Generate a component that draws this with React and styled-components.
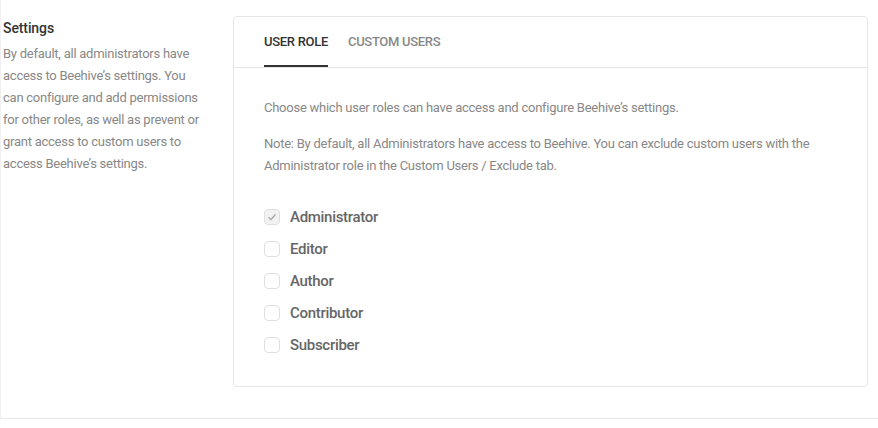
import React from "react";
import styled, { createGlobalStyle } from "styled-components";

const Global = createGlobalStyle`
  html, body { margin: 0; padding: 0; background: #fff; }
  body { font-family: Roboto, "Liberation Sans", sans-serif; -webkit-font-smoothing: antialiased; }
  * { box-sizing: border-box; }
`;

const Wrapper = styled.div`
  display: grid;
  grid-template-columns: 230px 1fr;
  padding: 16px 10px 31px 2px;
  border-left: 1px solid #f0f0f0;
  border-bottom: 1px solid #e6e6e6;
`;

const Side = styled.div`
  max-width: 205px;
  padding-top: 1px;
`;

const Heading = styled.h3`
  margin: 0 0 4px;
  font-size: 14px;
  line-height: 22px;
  font-weight: 500;
  letter-spacing: -0.1px;
  color: #333;
`;

const SideText = styled.p`
  margin: 0;
  font-size: 13px;
  line-height: 22px;
  letter-spacing: -0.25px;
  color: #888;
`;

const Card = styled.div`
  border: 1px solid #e6e6e6;
  border-radius: 4px;
  background: #fff;
`;

const TabBar = styled.div`
  display: flex;
  gap: 20px;
  padding: 0 30px;
  border-bottom: 1px solid #e6e6e6;
`;

const Tab = styled.div`
  padding: 15px 0 13px;
  font-size: 13px;
  line-height: 20px;
  font-weight: 500;
  letter-spacing: -0.3px;
  text-transform: uppercase;
  color: ${(p) => (p.$active ? "#333" : "#888")};
  border-bottom: 2px solid ${(p) => (p.$active ? "#333" : "transparent")};
`;

const Body = styled.div`
  padding: 29px 30px 25px;
`;

const Para = styled.p`
  margin: 0 0 14px;
  font-size: 13px;
  line-height: 22px;
  letter-spacing: -0.25px;
  color: #888;
`;

const List = styled.div`
  margin-top: 24px;
  display: flex;
  flex-direction: column;
`;

const Row = styled.label`
  display: flex;
  align-items: center;
  gap: 10px;
  height: 32px;
  font-size: 15px;
  font-weight: 500;
  letter-spacing: -0.3px;
  color: #666;
`;

const Box = styled.span`
  width: 16px;
  height: 16px;
  border: 1px solid #e0e0e0;
  border-radius: 4px;
  background: ${(p) => (p.$checked ? "#f2f2f2" : "#fff")};
  display: flex;
  align-items: center;
  justify-content: center;
`;

const roles = [
  { name: "Administrator", checked: true },
  { name: "Editor" },
  { name: "Author" },
  { name: "Contributor" },
  { name: "Subscriber" },
];

export default function App() {
  return (
    <>
      <Global />
      <Wrapper>
        <Side>
          <Heading>Settings</Heading>
          <SideText>
            By default, all administrators have access to Beehive’s settings. You can configure and add
            permissions for other roles, as well as prevent or grant access to custom users to access
            Beehive’s settings.
          </SideText>
        </Side>
        <Card>
          <TabBar>
            <Tab $active>User Role</Tab>
            <Tab>Custom Users</Tab>
          </TabBar>
          <Body>
            <Para>Choose which user roles can have access and configure Beehive’s settings.</Para>
            <Para>
              Note: By default, all Administrators have access to Beehive. You can exclude custom users with the
              Administrator role in the Custom Users / Exclude tab.
            </Para>
            <List>
              {roles.map((r) => (
                <Row key={r.name}>
                  <Box $checked={r.checked}>
                    {r.checked && (
                      <svg width="10" height="8" viewBox="0 0 10 8">
                        <path d="M1.5 4.2 L4 6.5 L8.5 1.5" fill="none" stroke="#aaa" strokeWidth="1.5" />
                      </svg>
                    )}
                  </Box>
                  {r.name}
                </Row>
              ))}
            </List>
          </Body>
        </Card>
      </Wrapper>
    </>
  );
}
